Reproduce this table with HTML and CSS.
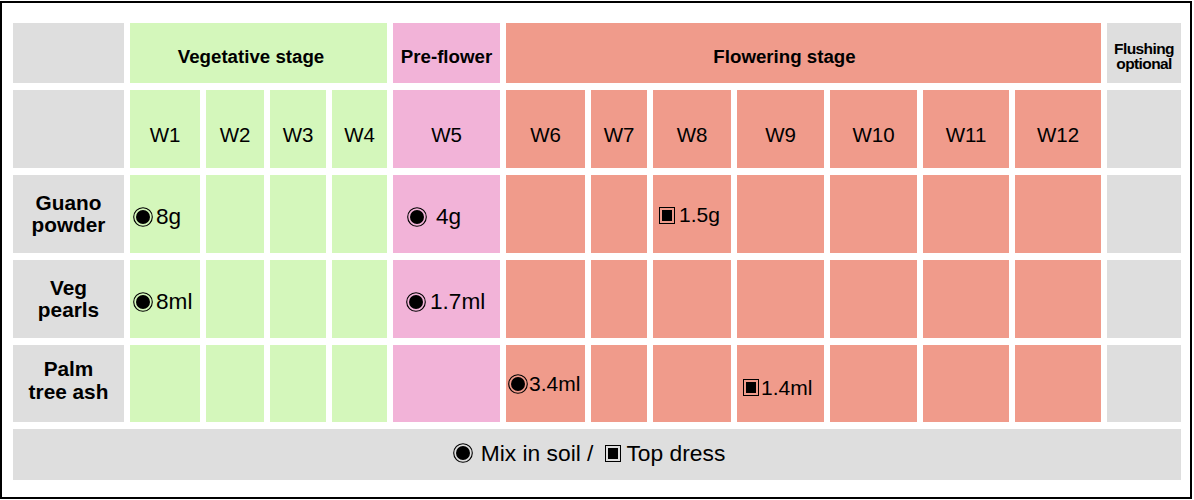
FILE: index.html
```html
<!DOCTYPE html>
<html lang="en">
<head>
<meta charset="utf-8">
<title>Feeding schedule</title>
<link rel="stylesheet" href="styles.css">
</head>
<body>
<div class="frame">
  <div class="chart">
    <!-- stage header row -->
    <div class="cell gray"></div>
    <div class="cell green stage stage--veg">Vegetative stage</div>
    <div class="cell pink stage">Pre-flower</div>
    <div class="cell salmon stage stage--flo">Flowering stage</div>
    <div class="cell gray flush">Flushing<br>optional</div>

    <!-- week row -->
    <div class="cell gray"></div>
    <div class="cell green week">W1</div>
    <div class="cell green week">W2</div>
    <div class="cell green week">W3</div>
    <div class="cell green week">W4</div>
    <div class="cell pink week">W5</div>
    <div class="cell salmon week">W6</div>
    <div class="cell salmon week">W7</div>
    <div class="cell salmon week">W8</div>
    <div class="cell salmon week">W9</div>
    <div class="cell salmon week">W10</div>
    <div class="cell salmon week">W11</div>
    <div class="cell salmon week">W12</div>
    <div class="cell gray"></div>

    <!-- Guano powder -->
    <div class="cell gray label">Guano<br>powder</div>
    <div class="cell green dose dose--w1"><svg class="ico-mix" viewBox="0 0 20 20"><circle cx="10" cy="10" r="9.3" fill="none" stroke="#000" stroke-width="1.1"/><circle cx="10" cy="10" r="7" fill="#000"/></svg><span class="amt amt--lg">8g</span></div>
    <div class="cell green"></div>
    <div class="cell green"></div>
    <div class="cell green"></div>
    <div class="cell pink dose dose--w5a"><svg class="ico-mix" viewBox="0 0 20 20"><circle cx="10" cy="10" r="9.3" fill="none" stroke="#000" stroke-width="1.1"/><circle cx="10" cy="10" r="7" fill="#000"/></svg><span class="amt amt--lg">4g</span></div>
    <div class="cell salmon"></div>
    <div class="cell salmon"></div>
    <div class="cell salmon dose dose--w8"><svg class="ico-top" viewBox="0 0 16 17"><rect x="0.5" y="0.5" width="15" height="16" fill="none" stroke="#000" stroke-width="1"/><rect x="3" y="3" width="10" height="11" fill="#000"/></svg><span class="amt amt--md">1.5g</span></div>
    <div class="cell salmon"></div>
    <div class="cell salmon"></div>
    <div class="cell salmon"></div>
    <div class="cell salmon"></div>
    <div class="cell gray"></div>

    <!-- Veg pearls -->
    <div class="cell gray label">Veg<br>pearls</div>
    <div class="cell green dose dose--w1"><svg class="ico-mix" viewBox="0 0 20 20"><circle cx="10" cy="10" r="9.3" fill="none" stroke="#000" stroke-width="1.1"/><circle cx="10" cy="10" r="7" fill="#000"/></svg><span class="amt amt--lg">8ml</span></div>
    <div class="cell green"></div>
    <div class="cell green"></div>
    <div class="cell green"></div>
    <div class="cell pink dose dose--w5b"><svg class="ico-mix" viewBox="0 0 20 20"><circle cx="10" cy="10" r="9.3" fill="none" stroke="#000" stroke-width="1.1"/><circle cx="10" cy="10" r="7" fill="#000"/></svg><span class="amt amt--lg">1.7ml</span></div>
    <div class="cell salmon"></div>
    <div class="cell salmon"></div>
    <div class="cell salmon"></div>
    <div class="cell salmon"></div>
    <div class="cell salmon"></div>
    <div class="cell salmon"></div>
    <div class="cell salmon"></div>
    <div class="cell gray"></div>

    <!-- Palm tree ash -->
    <div class="cell gray label label--palm">Palm<br>tree ash</div>
    <div class="cell green"></div>
    <div class="cell green"></div>
    <div class="cell green"></div>
    <div class="cell green"></div>
    <div class="cell pink"></div>
    <div class="cell salmon dose dose--w6"><svg class="ico-mix" viewBox="0 0 20 20"><circle cx="10" cy="10" r="9.3" fill="none" stroke="#000" stroke-width="1.1"/><circle cx="10" cy="10" r="7" fill="#000"/></svg><span class="amt amt--md">3.4ml</span></div>
    <div class="cell salmon"></div>
    <div class="cell salmon"></div>
    <div class="cell salmon dose dose--w9"><svg class="ico-top" viewBox="0 0 16 17"><rect x="0.5" y="0.5" width="15" height="16" fill="none" stroke="#000" stroke-width="1"/><rect x="3" y="3" width="10" height="11" fill="#000"/></svg><span class="amt amt--md">1.4ml</span></div>
    <div class="cell salmon"></div>
    <div class="cell salmon"></div>
    <div class="cell salmon"></div>
    <div class="cell gray"></div>

    <!-- legend -->
    <div class="cell gray legend">
      <svg class="ico-mix" viewBox="0 0 20 20"><circle cx="10" cy="10" r="9.3" fill="none" stroke="#000" stroke-width="1.1"/><circle cx="10" cy="10" r="7" fill="#000"/></svg>
      <span class="legend__mix">Mix in soil /</span>
      <svg class="ico-top" viewBox="0 0 16 17"><rect x="0.5" y="0.5" width="15" height="16" fill="none" stroke="#000" stroke-width="1"/><rect x="3" y="3" width="10" height="11" fill="#000"/></svg>
      <span class="legend__top">Top dress</span>
    </div>
  </div>
</div>
</body>
</html>
```

FILE: styles.css
```css
html, body {
  margin: 0;
  padding: 0;
  background: #fff;
}

body {
  font-family: "Liberation Sans", Arial, sans-serif;
  color: #000;
}

.frame {
  box-sizing: border-box;
  width: 1192px;
  height: 498px;
  margin-top: 1px;
  border: 2px solid #000;
  padding: 20px 0 0 11px;
}

.chart {
  display: grid;
  grid-template-columns: 111px 70px 58px 56px 55px 107px 79px 56px 78px 87px 87px 86px 86px 74px;
  grid-template-rows: 60px 78px 78px 78px 77px 51px;
  column-gap: 6px;
  row-gap: 7px;
}

.cell {
  box-sizing: border-box;
  display: flex;
  align-items: center;
  justify-content: center;
  text-align: center;
  min-width: 0;
}

.gray   { background: #dedede; }
.green  { background: #d4f7bb; }
.pink   { background: #f2b3d8; }
.salmon { background: #f09b8b; }

/* stage header row */
.stage {
  font-weight: bold;
  font-size: 18.7px;
  padding-top: 8px;
}
.stage--veg {
  grid-column: span 4;
  padding-right: 15px;
}
.stage--flo {
  grid-column: span 7;
  padding-right: 38px;
}

.flush {
  font-weight: bold;
  font-size: 15.5px;
  letter-spacing: -0.6px;
  line-height: 15px;
  padding-top: 5px;
}

/* weeks */
.week {
  font-size: 20.5px;
  padding-top: 12px;
}

/* row labels */
.label {
  font-weight: bold;
  font-size: 20.8px;
  line-height: 22px;
}
.label--palm {
  padding-bottom: 8px;
  line-height: 23px;
}

/* dose cells */
.dose {
  justify-content: flex-start;
  padding-top: 5px;
}
.ico-mix {
  width: 20px;
  height: 20px;
  flex: none;
  display: block;
}
.ico-top {
  width: 16px;
  height: 17px;
  flex: none;
  display: block;
}
.amt--lg { font-size: 22.6px; }
.amt--md { font-size: 21px; }

.dose--w1  { padding-left: 3px;  gap: 3px; }
.dose--w5a { padding-left: 14px; gap: 9px; }
.dose--w5b { padding-left: 13px; gap: 4px; }
.dose--w8  { padding-left: 6px;  gap: 4px; padding-top: 2px; }
.dose--w6  { padding-left: 2px;  gap: 1px; padding-top: 0; }
.dose--w9  { padding-left: 6px;  gap: 2px; padding-top: 8px; }

/* legend */
.legend {
  grid-column: span 14;
  font-size: 22.8px;
  padding-right: 16px;
  padding-bottom: 3px;
}
.legend__mix {
  margin-left: 8px;
  margin-right: 12px;
}
.legend__top {
  margin-left: 5px;
}
```
